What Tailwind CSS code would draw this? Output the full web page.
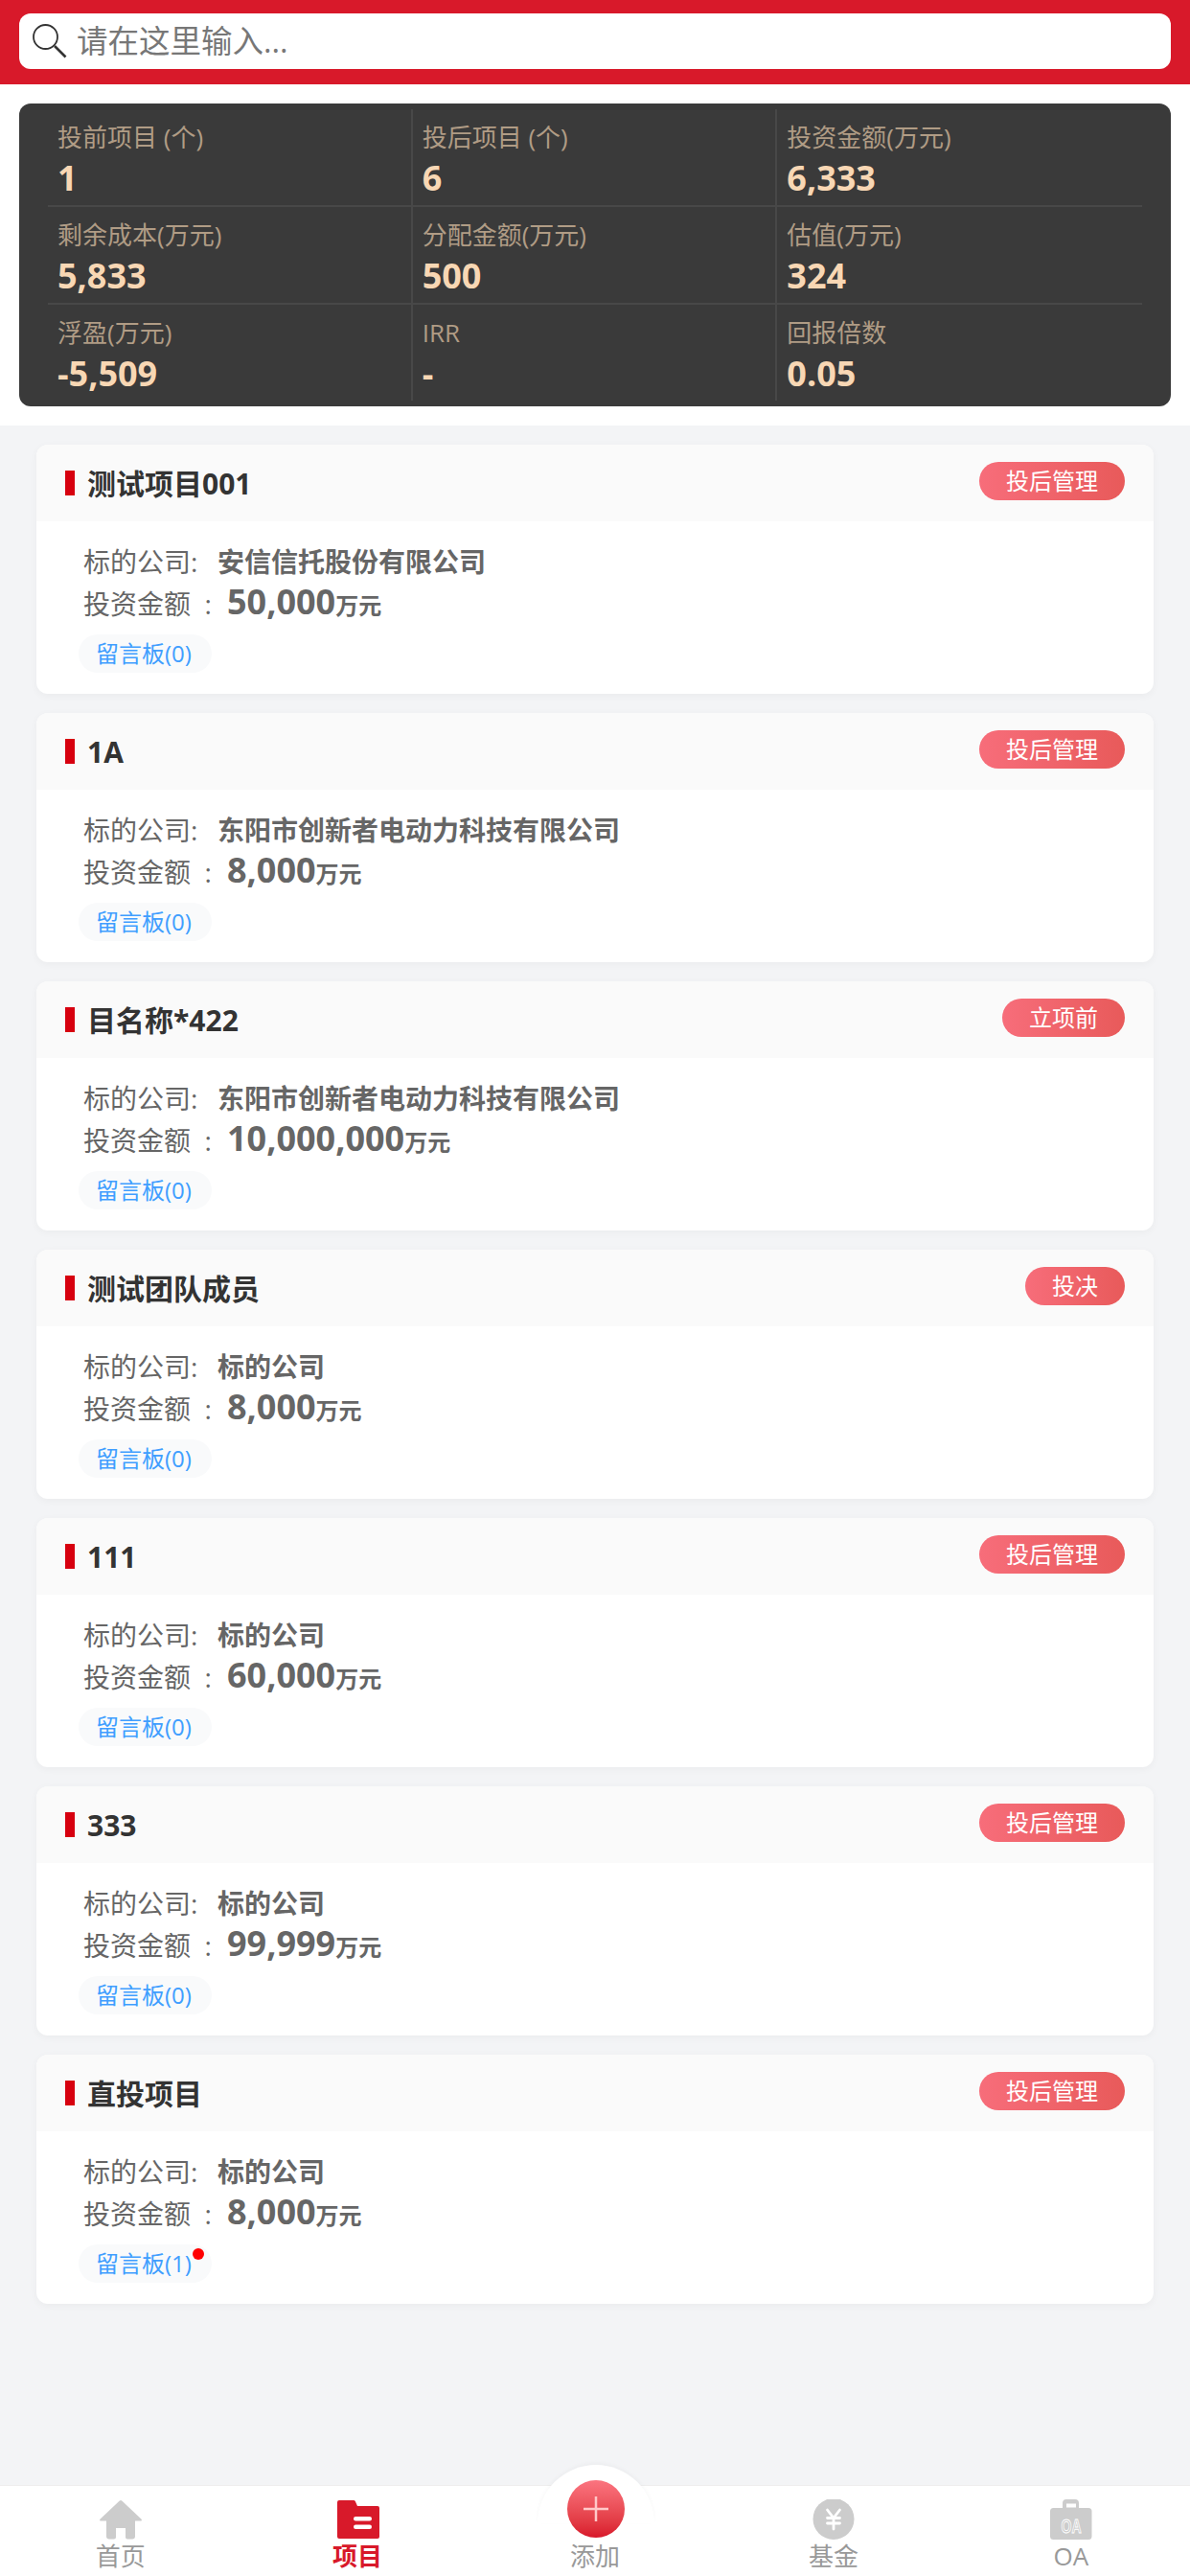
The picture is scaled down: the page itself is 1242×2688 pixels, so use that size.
<!DOCTYPE html>
<html lang="zh-CN">
<head>
  <meta charset="UTF-8">
  <title>项目</title>
  <script src="https://cdn.jsdelivr.net/npm/@tailwindcss/browser@4"></script>
</head>
<body class="bg-[#f3f4f6] font-['Open_Sans','Noto_Sans_CJK_SC',sans-serif] relative h-[2688px] overflow-hidden">
  <!-- search -->
  <div class="bg-[#d8192a] h-[88px] px-5 pt-[14px]">
    <div class="bg-white h-[58px] rounded-[12px] flex items-center pl-[14px] text-[32.500px] text-[#777]">
      <svg class="w-[36px] h-[36px] mr-[10px]" viewBox="0 0 36 36" fill="none" stroke="#333">
        <circle cx="13.500" cy="13.500" r="12.500" stroke-width="1.800"/>
        <path d="M23 23L34.500 34.500" stroke-width="2.600"/>
      </svg>
      <span>请在这里输入...</span>
    </div>
  </div>

  <!-- stats -->
  <div class="bg-white h-[356px] px-5 pt-5">
    <div class="bg-[#3a3a3a] rounded-[12px] h-[316px] px-[30px] py-[6px] grid grid-cols-3 grid-rows-[102px_102px_100px]">
      <div class="pl-[10px] pt-[11px] border-r-2 border-b-2 border-[#484848]"><p class="text-[26px] leading-[36px] text-[#b09c85]">投前项目 (个)</p><p class="text-[36px] leading-[50px] font-bold text-[#f8d7b4]">1</p></div>
      <div class="pl-[10px] pt-[11px] border-r-2 border-b-2 border-[#484848]"><p class="text-[26px] leading-[36px] text-[#b09c85]">投后项目 (个)</p><p class="text-[36px] leading-[50px] font-bold text-[#f8d7b4]">6</p></div>
      <div class="pl-[10px] pt-[11px] border-b-2 border-[#484848]"><p class="text-[26px] leading-[36px] text-[#b09c85]">投资金额(万元)</p><p class="text-[36px] leading-[50px] font-bold text-[#f8d7b4]">6,333</p></div>
      <div class="pl-[10px] pt-[11px] border-r-2 border-b-2 border-[#484848]"><p class="text-[26px] leading-[36px] text-[#b09c85]">剩余成本(万元)</p><p class="text-[36px] leading-[50px] font-bold text-[#f8d7b4]">5,833</p></div>
      <div class="pl-[10px] pt-[11px] border-r-2 border-b-2 border-[#484848]"><p class="text-[26px] leading-[36px] text-[#b09c85]">分配金额(万元)</p><p class="text-[36px] leading-[50px] font-bold text-[#f8d7b4]">500</p></div>
      <div class="pl-[10px] pt-[11px] border-b-2 border-[#484848]"><p class="text-[26px] leading-[36px] text-[#b09c85]">估值(万元)</p><p class="text-[36px] leading-[50px] font-bold text-[#f8d7b4]">324</p></div>
      <div class="pl-[10px] pt-[11px] border-r-2 border-[#484848]"><p class="text-[26px] leading-[36px] text-[#b09c85]">浮盈(万元)</p><p class="text-[36px] leading-[50px] font-bold text-[#f8d7b4]">-5,509</p></div>
      <div class="pl-[10px] pt-[11px] border-r-2 border-[#484848]"><p class="text-[26px] leading-[36px] text-[#b09c85]">IRR</p><p class="text-[36px] leading-[50px] font-bold text-[#f8d7b4]">-</p></div>
      <div class="pl-[10px] pt-[11px]"><p class="text-[26px] leading-[36px] text-[#b09c85]">回报倍数</p><p class="text-[36px] leading-[50px] font-bold text-[#f8d7b4]">0.05</p></div>
    </div>
  </div>

  <!-- project cards -->
  <div id="list" class="px-[38px] pt-5 flex flex-col gap-5"></div>

  <!-- tab bar -->
  <div class="absolute left-0 right-0 top-[2593px] h-[95px] bg-white border-t border-[#eeeeee] grid grid-cols-5">
    <div class="flex flex-col items-center pt-[14px] pl-[3px]">
      <svg class="w-[46px] h-[42px]" viewBox="0 0 46 42" fill="#cccccc"><path d="M21.800 1.600a1.600 1.600 0 0 1 2.400 0L44.600 20.800a1 1 0 0 1-.7 1.700H38V38.500a3 3 0 0 1-3 3H30a2 2 0 0 1-2-2V30H18V39.500a2 2 0 0 1-2 2H11a3 3 0 0 1-3-3V22.500H2.100a1 1 0 0 1-.7-1.700z"/></svg>
      <span class="text-[26px] leading-[34px] text-[#999]">首页</span>
    </div>
    <div class="flex flex-col items-center pt-[14px] pl-[1px]">
      <svg class="w-[46px] h-[42px]" viewBox="0 0 46 42"><path fill="#d8192a" d="M4 1H19a2 2 0 0 1 1.800 1.100L23 7H44a2 2 0 0 1 2 2V39a2 2 0 0 1-2 2H4a2 2 0 0 1-2-2V3a2 2 0 0 1 2-2z"/><rect x="19" y="18" width="19" height="4.500" rx="2.250" fill="#fff"/><rect x="19" y="26.500" width="19" height="4.500" rx="2.250" fill="#fff"/></svg>
      <span class="text-[26px] leading-[34px] font-bold text-[#d8192a]">项目</span>
    </div>
    <div class="flex flex-col items-center relative">
      <div class="absolute top-[-22px] left-[calc(50%+1px)] -translate-x-1/2 w-[122px] h-[61px] rounded-t-full bg-white shadow-[0_-2px_4px_rgba(0,0,0,0.03)]"></div>
      <div class="absolute top-[-6px] left-[calc(50%+1px)] -translate-x-1/2 w-[60px] h-[60px] rounded-full bg-gradient-to-b from-[#fb7480] to-[#d8152a] flex items-center justify-center">
        <svg class="w-[28px] h-[28px]" viewBox="0 0 28 28" stroke="#ffc8c8" stroke-width="2.500"><path d="M14 1V27M1 14H27"/></svg>
      </div>
      <span class="relative mt-[56px] text-[26px] leading-[34px] text-[#999]">添加</span>
    </div>
    <div class="flex flex-col items-center pt-[14px] pl-[1px]">
      <svg class="w-[46px] h-[42px]" viewBox="0 0 46 42"><ellipse cx="23" cy="20.500" rx="21.500" ry="21.500" fill="#cccccc"/><path d="M16.500 11L23 19.500L29.500 11M23 19.500V31M16.500 19.500H29.500M16.500 25H29.500" fill="none" stroke="#fff" stroke-width="2.800" stroke-linecap="round"/></svg>
      <span class="text-[26px] leading-[34px] text-[#999]">基金</span>
    </div>
    <div class="flex flex-col items-center pt-[14px]">
      <svg class="w-[46px] h-[42px]" viewBox="0 0 46 42"><path fill="#cccccc" d="M4.500 9H14V4a4 4 0 0 1 4-4H27a4 4 0 0 1 4 4V9H41a3.500 3.500 0 0 1 3.500 3.500V38.500a3.500 3.500 0 0 1-3.500 3.500H4.500a3.500 3.500 0 0 1-3.500-3.500V12.500a3.500 3.500 0 0 1 3.500-3.500z"/><rect x="18" y="4.500" width="10" height="4" fill="#fff"/><text x="23" y="35" text-anchor="middle" font-size="20" textLength="21" lengthAdjust="spacingAndGlyphs" font-weight="700" font-family="'Liberation Sans'" fill="#cccccc" stroke="#fff" stroke-width="0.900">OA</text></svg>
      <span class="text-[26px] leading-[34px] text-[#999]">OA</span>
    </div>
  </div>

  <script>
    const projects = [
      { name: '测试项目001', tag: '投后管理', company: '安信信托股份有限公司', amount: '50,000', notes: 0 },
      { name: '1A', tag: '投后管理', company: '东阳市创新者电动力科技有限公司', amount: '8,000', notes: 0 },
      { name: '目名称*422', tag: '立项前', company: '东阳市创新者电动力科技有限公司', amount: '10,000,000', notes: 0 },
      { name: '测试团队成员', tag: '投决', company: '标的公司', amount: '8,000', notes: 0 },
      { name: '111', tag: '投后管理', company: '标的公司', amount: '60,000', notes: 0 },
      { name: '333', tag: '投后管理', company: '标的公司', amount: '99,999', notes: 0 },
      { name: '直投项目', tag: '投后管理', company: '标的公司', amount: '8,000', notes: 1 }
    ];
    const list = document.getElementById('list');
    projects.forEach(p => {
      const card = document.createElement('div');
      card.className = 'bg-white rounded-[12px] h-[260px] overflow-hidden shadow-[0_2px_8px_rgba(0,0,0,0.04)]';
      card.innerHTML = `
        <div class="h-[80px] bg-[#fafafa] flex items-start justify-between pl-[30px] pr-[30px]">
          <div class="flex items-center h-[80px]">
            <span class="w-[10px] h-[26px] bg-[#d7000f] mr-[13px]"></span>
            <span class="text-[30px] font-bold text-[#333]">${p.name}</span>
          </div>
          <span class="mt-[18px] h-[40px] px-[28px] rounded-full bg-gradient-to-r from-[#f76d7a] to-[#e85a5a] text-white text-[24px] leading-[40px]">${p.tag}</span>
        </div>
        <div class="pl-[49px] pt-[20px] text-[#666]">
          <div class="h-[44px] flex items-center text-[28px] leading-[44px]"><span class="w-[140px] whitespace-nowrap">标的公司:</span><b>${p.company}</b></div>
          <div class="h-[44px] flex items-baseline text-[28px] leading-[40px]"><span class="w-[150px] whitespace-pre">投资金额  :</span><b class="text-[36px] leading-[40px]">${p.amount}</b><b class="text-[24px] leading-[40px]">万元</b></div>
          <div class="relative mt-[10px] -ml-[5px] w-fit h-[40px] rounded-full bg-[#f9fafb] pl-[18px] pr-[21px] text-[24px] leading-[40px] text-[#409eff]">留言板(${p.notes})
            ${p.notes ? '<span class="absolute right-[8px] top-[4px] w-[12px] h-[12px] rounded-full bg-[#ff0000]"></span>' : ''}
          </div>
        </div>`;
      list.appendChild(card);
    });
  </script>
</body>
</html>
